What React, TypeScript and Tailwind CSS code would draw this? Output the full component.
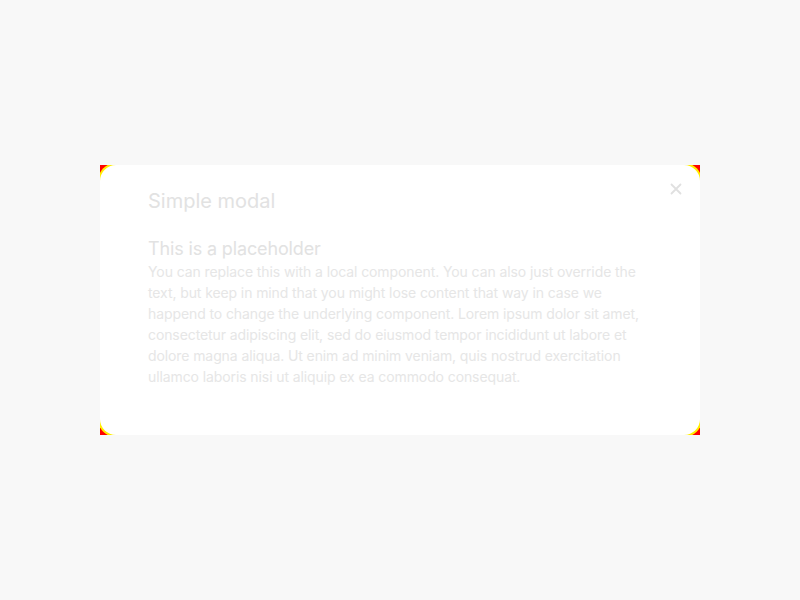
import React from "react";

const body =
  "You can replace this with a local component. You can also just override the text, but keep in mind that you might lose content that way in case we happend to change the underlying component. Lorem ipsum dolor sit amet, consectetur adipiscing elit, sed do eiusmod tempor incididunt ut labore et dolore magna aliqua. Ut enim ad minim veniam, quis nostrud exercitation ullamco laboris nisi ut aliquip ex ea commodo consequat.";

const App: React.FC = () => {
  return (
    <div className="flex h-screen w-full items-center justify-center bg-[#f8f8f8] font-['Inter',sans-serif]">
      <div className="w-[600px] overflow-hidden bg-[#ff0000]">
        <div className="relative rounded-2xl bg-white px-12 pt-[22px] pb-12 ring-2 ring-[#ffee00]">
          <button className="absolute right-3 top-3 flex h-6 w-6 items-center justify-center text-[#e0e0e0]">
            <svg width="12" height="12" viewBox="0 0 12 12" fill="none" stroke="currentColor" strokeWidth="1.8" strokeLinecap="round">
              <path d="M1.5 1.5l9 9M10.5 1.5l-9 9" />
            </svg>
          </button>
          <h2 className="text-xl leading-7 text-[#e2e2e2]">Simple modal</h2>
          <h3 className="mt-[22px] text-lg leading-6 tracking-[-0.008em] text-[#e2e2e2]">This is a placeholder</h3>
          <p className="text-sm leading-[21px] tracking-[-0.007em] text-[#e6e6e6]">{body}</p>
        </div>
      </div>
    </div>
  );
};

export default App;
